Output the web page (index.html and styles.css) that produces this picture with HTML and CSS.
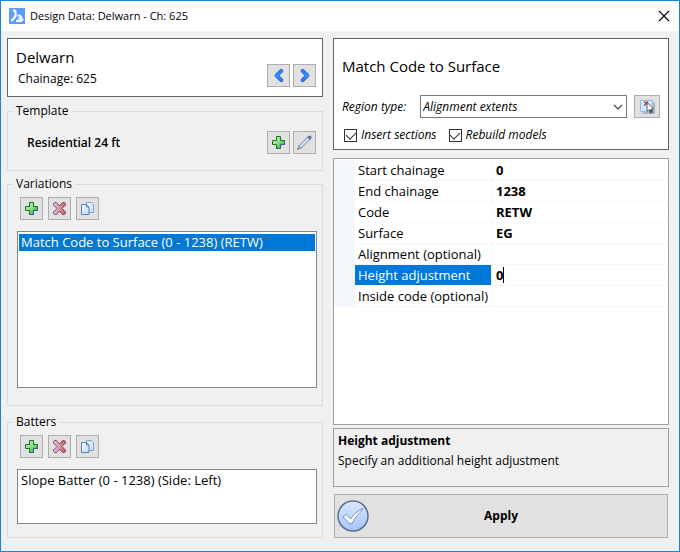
FILE: index.html
```html
<!DOCTYPE html>
<html lang="en">
<head>
    <meta charset="UTF-8">
    <meta name="viewport" content="width=device-width, initial-scale=1.0">
    <title>Design Data: Delwarn - Ch: 625</title>
    <link rel="stylesheet" href="styles.css">
</head>
<body>
    <!-- Shared icons -->
    <svg class="icon-defs" aria-hidden="true">
        <defs>
            <linearGradient id="green" x1="0" y1="0" x2="1" y2="1">
                <stop offset="0" stop-color="#d5ecd0"/>
                <stop offset="0.5" stop-color="#8fd88c"/>
                <stop offset="1" stop-color="#12b000"/>
            </linearGradient>
            <linearGradient id="red" x1="0" y1="0" x2="1" y2="0">
                <stop offset="0" stop-color="#c3cdf3"/>
                <stop offset="0.45" stop-color="#c6a3b8"/>
                <stop offset="1" stop-color="#c65a5a"/>
            </linearGradient>
            <linearGradient id="page" x1="0" y1="0" x2="1" y2="1">
                <stop offset="0" stop-color="#ffffff"/>
                <stop offset="1" stop-color="#bcd8f8"/>
            </linearGradient>
            <linearGradient id="blue" x1="0" y1="0" x2="0" y2="1">
                <stop offset="0" stop-color="#3f74e8"/>
                <stop offset="0.5" stop-color="#2aa0fa"/>
                <stop offset="1" stop-color="#3f74e8"/>
            </linearGradient>
            <linearGradient id="sky" x1="0" y1="0" x2="0" y2="1">
                <stop offset="0" stop-color="#dbe7ff"/>
                <stop offset="1" stop-color="#a4c6fb"/>
            </linearGradient>
        </defs>
        <symbol id="icon-add" viewBox="0 0 15 15">
            <path d="M5.5 1.500h4v4h4v4h-4v4h-4v-4h-4v-4h4z" fill="url(#green)" stroke="#0e7a1c"/>
            <path d="M9.500 10v3.500h-4M13.500 7v2.500h-4" fill="none" stroke="#2a5f98"/>
        </symbol>
        <symbol id="icon-delete" viewBox="0 0 15 15">
            <path d="M2.500 1.500h2l3 3.500 3-3.500h2l1 1v1.500l-3.500 3.500 3.500 3.500v1.500l-1 1h-2l-3-3.500-3 3.500h-2l-1-1v-1.500l3.500-3.500-3.500-3.500v-1.500z" fill="url(#red)" stroke="#9c4450"/>
        </symbol>
        <symbol id="icon-copy" viewBox="0 0 15 15">
            <path d="M6.500 1.500h5l2 2v8h-7z" fill="url(#page)" stroke="#7ba3cf"/>
            <path d="M1.500 3.500h5l2.500 2.500v7.500h-7.500z" fill="url(#page)" stroke="#4f82c0"/>
            <path d="M6.500 3.500v2.500h2.500" fill="none" stroke="#4f82c0"/>
        </symbol>
    </svg>

    <div class="window">
        <header class="titlebar">
            <svg class="logo" viewBox="0 0 16 16">
                <rect width="16" height="16" fill="#5b9df8"/>
                <path d="M4 2l2.500 1.200v5L2.500 13" fill="none" stroke="#fff" stroke-width="2.200"/>
                <path d="M8.500 7.500h2.500l1.200 1.500-1.700 1.500h1.700l1.300 1.300-1.500 1.200H7" fill="none" stroke="#fff" stroke-width="1.800"/>
            </svg>
            <h1>Design Data: Delwarn - Ch: 625</h1>
            <button class="close" aria-label="Close">
                <svg viewBox="0 0 12 12"><path d="M1 1l10 10M11 1L1 11" stroke="#000" stroke-width="1.100"/></svg>
            </button>
        </header>

        <main class="content">
            <div class="left">
                <section class="panel station">
                    <div>
                        <h2>Delwarn</h2>
                        <p>Chainage: 625</p>
                    </div>
                    <div class="pair">
                        <button class="tool" aria-label="Previous">
                            <svg viewBox="0 0 16 16"><path d="M11 3L6 8l5 5" fill="none" stroke="#2c62dc" stroke-width="4.200" stroke-linecap="round" stroke-linejoin="round"/><path d="M11 3L6 8l5 5" fill="none" stroke="url(#blue)" stroke-width="2.600" stroke-linecap="round"/></svg>
                        </button>
                        <button class="tool" aria-label="Next">
                            <svg viewBox="0 0 16 16"><path d="M6 3l5 5-5 5" fill="none" stroke="#2c62dc" stroke-width="4.200" stroke-linecap="round" stroke-linejoin="round"/><path d="M6 3l5 5-5 5" fill="none" stroke="url(#blue)" stroke-width="2.600" stroke-linecap="round"/></svg>
                        </button>
                    </div>
                </section>

                <fieldset class="template">
                    <legend>Template</legend>
                    <div class="template-row">
                        <strong>Residential 24 ft</strong>
                        <div class="pair">
                            <button class="tool" aria-label="Add template"><svg><use href="#icon-add"/></svg></button>
                            <button class="tool" aria-label="Edit template">
                                <svg viewBox="0 0 16 16">
                                    <path d="M0.800 15.200l1-4 3 3z" fill="#d9c48a" stroke="#8d8468" stroke-width="0.600"/>
                                    <path d="M1.800 11.800L11.500 1.800l2.600 2.600-9.700 9.800z" fill="#b9cbea" stroke="#7287ac" stroke-width="0.800"/>
                                    <path d="M3.500 12.500l9-9" stroke="#e8f0fc"/>
                                    <path d="M11 2.200L12.500 0.800l2.200-0.100 0.800 1.300-0.500 2-1.200 1.400z" fill="#5a6f9c"/>
                                    <path d="M0.500 15.500l0.500-1.800 1.200 1.200z" fill="#333"/>
                                </svg>
                            </button>
                        </div>
                    </div>
                </fieldset>

                <fieldset class="variations">
                    <legend>Variations</legend>
                    <div class="toolbar">
                        <button class="tool" aria-label="Add variation"><svg><use href="#icon-add"/></svg></button>
                        <button class="tool" aria-label="Delete variation"><svg><use href="#icon-delete"/></svg></button>
                        <button class="tool" aria-label="Copy variation"><svg><use href="#icon-copy"/></svg></button>
                    </div>
                    <ul class="listbox" role="listbox" aria-label="Variations">
                        <li role="option" aria-selected="true">Match Code to Surface (0 - 1238) (RETW)</li>
                    </ul>
                </fieldset>

                <fieldset class="batters">
                    <legend>Batters</legend>
                    <div class="toolbar">
                        <button class="tool" aria-label="Add batter"><svg><use href="#icon-add"/></svg></button>
                        <button class="tool" aria-label="Delete batter"><svg><use href="#icon-delete"/></svg></button>
                        <button class="tool" aria-label="Copy batter"><svg><use href="#icon-copy"/></svg></button>
                    </div>
                    <ul class="listbox" role="listbox" aria-label="Batters">
                        <li role="option" aria-selected="false">Slope Batter (0 - 1238) (Side: Left)</li>
                    </ul>
                </fieldset>
            </div>

            <div class="right">
                <section class="panel variation">
                    <h2>Match Code to Surface</h2>
                    <div class="region">
                        <label for="region-type">Region type:</label>
                        <div class="combo">
                            <select id="region-type">
                                <option>Alignment extents</option>
                            </select>
                            <svg viewBox="0 0 10 6"><path d="M1 1l4 4 4-4" fill="none" stroke="#444" stroke-width="1.200"/></svg>
                        </div>
                        <button class="tool pick" aria-label="Pick region">
                            <svg viewBox="0 0 16 16">
                                <path d="M3 15h12V4" fill="none" stroke="#a9b2bd" stroke-width="2"/>
                                <path d="M0.500 1.500h13v12h-13z" fill="#cfe6fb" stroke="#86b9ec"/>
                                <path d="M4.500 2.500l4 4.500M8.500 2.500l-4 4.500" stroke="#c42a34" stroke-width="1.300"/>
                                <path d="M7.500 3.500v9.500l2-1.500 1.500 3.500 2.500-1-1.500-3.300h2.500z" fill="#fff" stroke="#4a4a4a" stroke-width="0.900"/>
                                <path d="M10 11.500l2-0.800 1.500 3.300-2.500 1z" fill="#555"/>
                            </svg>
                        </button>
                    </div>
                    <div class="checks">
                        <label><input type="checkbox" checked> Insert sections</label>
                        <label><input type="checkbox" checked> Rebuild models</label>
                    </div>
                </section>

                <section class="properties">
                    <table>
                        <tr><td class="gutter"></td><th scope="row">Start chainage</th><td>0</td></tr>
                        <tr><td class="gutter"></td><th scope="row">End chainage</th><td>1238</td></tr>
                        <tr><td class="gutter"></td><th scope="row">Code</th><td>RETW</td></tr>
                        <tr><td class="gutter"></td><th scope="row">Surface</th><td>EG</td></tr>
                        <tr><td class="gutter"></td><th scope="row">Alignment (optional)</th><td></td></tr>
                        <tr class="selected">
                            <td class="gutter"></td>
                            <th scope="row"><label for="height-adjustment">Height adjustment</label></th>
                            <td><div class="editor"><input id="height-adjustment" type="text" value="0"></div></td>
                        </tr>
                        <tr><td class="gutter"></td><th scope="row">Inside code (optional)</th><td></td></tr>
                    </table>
                </section>

                <section class="help">
                    <h3>Height adjustment</h3>
                    <p>Specify an additional height adjustment</p>
                </section>

                <button class="apply">
                    <svg viewBox="0 0 32 32">
                        <circle cx="16" cy="16" r="15" fill="url(#sky)" stroke="#5a6f8c" stroke-width="1.500"/>
                        <path d="M6 17l3.500-2.500 4 4.500c3-4.500 7-8 12.500-10.500l-0.500 1.500c-4 3.500-7.500 8-10.500 13.500h-2z" fill="#fff" stroke="#7591bd"/>
                    </svg>
                    <span>Apply</span>
                </button>
            </div>
        </main>
    </div>
</body>
</html>
```
FILE: styles.css
```css
* {
    margin: 0;
    padding: 0;
    box-sizing: border-box;
}

body {
    font-family: "Open Sans", "Noto Sans", sans-serif;
    font-size: 12px;
    line-height: 16px;
    color: #000;
}

button,
input,
select {
    font: inherit;
    color: inherit;
}

.icon-defs {
    position: absolute;
    width: 0;
    height: 0;
}

.window {
    display: flex;
    flex-direction: column;
    min-height: 100vh;
    background: #f0f0f0;
    border: 1px solid #1883d7;
}

/* Title bar */
.titlebar {
    display: flex;
    align-items: center;
    height: 30px;
    padding: 0 8px;
    background: #fff;
}

.logo {
    width: 16px;
    height: 16px;
    margin-right: 5px;
}

.titlebar h1 {
    flex: 1;
    font-size: 11px;
    font-weight: normal;
}

.close {
    display: flex;
    padding: 1px;
    background: none;
    border: none;
}

.close svg {
    width: 12px;
    height: 12px;
}

/* Layout */
.content {
    flex: 1;
    display: flex;
    gap: 10px;
    padding: 7px 10px 13px 6px;
}

.left,
.right {
    display: flex;
    flex-direction: column;
    min-width: 0;
}

.left {
    flex: 316 1 0;
}

.right {
    flex: 336 1 0;
}

.panel {
    background: #fff;
    border: 1px solid #646464;
}

.panel h2 {
    font-size: 15px;
    font-weight: normal;
    line-height: 20px;
}

.pair {
    display: flex;
    gap: 3px;
}

.tool {
    display: flex;
    align-items: center;
    justify-content: center;
    width: 23px;
    height: 23px;
    background: #e1e1e1;
    border: 1px solid #adadad;
}

.tool svg {
    width: 15px;
    height: 15px;
}

/* Left column */
.station {
    display: flex;
    justify-content: space-between;
    align-items: flex-end;
    padding: 8px 6px 9px 8px;
}

.station p {
    padding: 4px 0 0 2px;
}

fieldset {
    min-width: 0;
    padding: 0 5px;
    border: 1px solid #dcdcdc;
}

legend {
    padding: 0 3px;
}

.template {
    margin-top: 6px;
}

.template-row {
    display: flex;
    align-items: center;
    justify-content: space-between;
    padding: 12px 1px 16px 14px;
}

.template-row strong {
    font-weight: 600;
}

.variations,
.batters {
    display: flex;
    flex-direction: column;
}

.variations {
    flex: 1;
    margin-top: 5px;
    padding-bottom: 17px;
}

.batters {
    margin-top: 8px;
    padding-bottom: 13px;
}

.toolbar {
    display: flex;
    gap: 5px;
    padding: 5px 0 11px 7px;
}

.listbox {
    flex: 1;
    min-height: 55px;
    margin-left: 4px;
    padding: 2px 1px;
    list-style: none;
    background: #fff;
    border: 1px solid #828790;
}

.listbox li {
    padding: 0 2px;
    font-size: 13px;
    line-height: 17px;
}

.listbox li[aria-selected="true"] {
    background: #0078d7;
    color: #fff;
}

/* Variation settings */
.variation {
    padding: 17px 8px 6px;
}

.region,
.checks {
    display: flex;
    align-items: center;
    font-style: italic;
}

.region {
    margin-top: 19px;
}

.combo {
    position: relative;
    flex: 1;
    margin: 0 7px 0 14px;
}

.combo select {
    display: block;
    width: 100%;
    height: 23px;
    padding: 0 2px;
    appearance: none;
    background: #fff;
    border: 1px solid #7a7a7a;
}

.combo svg {
    position: absolute;
    top: 9px;
    right: 4px;
    width: 10px;
    height: 6px;
    pointer-events: none;
}

.pick {
    width: 26px;
}

.checks {
    gap: 12px;
    padding-left: 2px;
    margin-top: 9px;
}

.checks label {
    display: flex;
    align-items: center;
    gap: 4px;
}

.checks input {
    display: flex;
    justify-content: center;
    width: 13px;
    height: 13px;
    appearance: none;
    border: 1px solid #333;
}

.checks input:checked::before {
    content: "";
    width: 5px;
    height: 8px;
    border: solid #333;
    border-width: 0 1px 1px 0;
    transform: rotate(45deg);
}

/* Property grid */
.properties {
    flex: 1;
    margin-top: 8px;
    padding-top: 1px;
    background: #fff;
    border: 1px solid #a0a0a0;
}

.properties table {
    width: 100%;
    table-layout: fixed;
    border-spacing: 0;
    font-size: 13px;
}

.properties th,
.properties td {
    height: 21px;
    padding: 0 3px;
    text-align: left;
    border-bottom: 1px solid #f4f7fc;
}

.properties th {
    width: 137px;
    font-weight: normal;
    border-right: 1px solid #f4f7fc;
    white-space: nowrap;
}

.properties td {
    padding-left: 4px;
    font-weight: bold;
}

.properties .gutter {
    width: 21px;
    padding: 0;
    background: #f4f7fc;
}

.properties .selected th {
    background: #0078d7;
    background-clip: padding-box;
    color: #fff;
}

.editor {
    display: flex;
}

.editor input {
    width: 7px;
    border: none;
    outline: none;
    background: none;
}

.editor::after {
    content: "";
    width: 1px;
    background: #000;
}

/* Help and apply */
.help {
    margin-top: 3px;
    padding: 4px 4px 17px;
    border: 1px solid #a0a0a0;
}

.help h3 {
    font-size: 12px;
}

.help p {
    padding-top: 4px;
}

.apply {
    display: flex;
    align-items: center;
    height: 44px;
    margin: 7px 1px 0;
    padding: 0 34px 0 2px;
    background: #e1e1e1;
    border: 1px solid #adadad;
    font-weight: bold;
}

.apply svg {
    width: 32px;
    height: 32px;
}

.apply span {
    flex: 1;
}
```
